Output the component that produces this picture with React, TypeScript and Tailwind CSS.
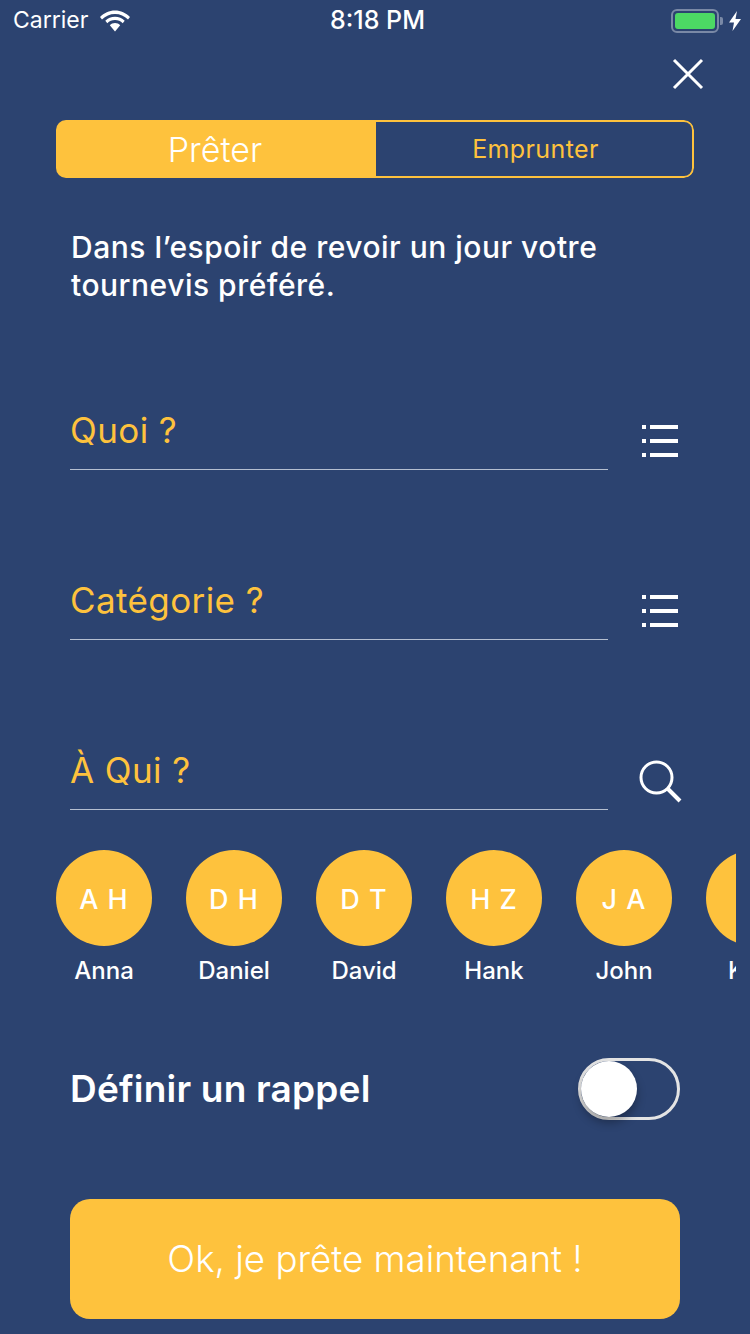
const INTER = "font-['Inter',sans-serif]";

const people = [
  { initials: "A H", name: "Anna" },
  { initials: "D H", name: "Daniel" },
  { initials: "D T", name: "David" },
  { initials: "H Z", name: "Hank" },
  { initials: "J A", name: "John" },
  { initials: "K", name: "Kate" },
];

const ListIcon = () => (
  <svg width="36" height="32" viewBox="0 0 36 32" fill="#fff" className="block">
    <rect x="0" y="0" width="4" height="4" />
    <rect x="8" y="0" width="28" height="4" />
    <rect x="0" y="14" width="4" height="4" />
    <rect x="8" y="14" width="28" height="4" />
    <rect x="0" y="28" width="4" height="4" />
    <rect x="8" y="28" width="28" height="4" />
  </svg>
);

const SearchIcon = () => (
  <svg width="44" height="44" viewBox="0 0 44 44" fill="none" stroke="#fff" className="ml-[1px] mt-[2px] block shrink-0">
    <circle cx="17.5" cy="17.5" r="15.5" strokeWidth="3" />
    <path d="M28.500 28.500L41 41" strokeWidth="4" />
  </svg>
);

const Field = ({ label, icon }: { label: string; icon: React.ReactNode }) => (
  <div className="flex h-[170px] items-end pl-[70px]">
    <div className="flex h-[70px] w-[538px] items-start border-b border-[#b5bfd0] text-[35px] leading-[40px] tracking-[0.4px] text-[#fec23d]">
      <span className="mt-[10px]">{label}</span>
    </div>
    <div className="ml-[30px] flex h-[58px] w-[44px] items-center justify-center self-end">{icon}</div>
  </div>
);

export default function App() {
  return (
    <div className={`${INTER} flex h-[1334px] w-[750px] flex-col overflow-hidden bg-[#2c4370] text-white`}>
      {/* status bar */}
      <div className="flex h-[40px] items-center justify-between pl-[13px] pr-[8px] pt-[1px] text-[24px]">
        <div className="flex w-[250px] items-center gap-[12px]">
          <span className="text-[23px] font-normal">Carrier</span>
          <svg width="30" height="22" viewBox="0 0 30 22" fill="#fff">
            <path d="M15 4C20 4 24.500 6 28 9.500L30 7C26 3 20.800 0.500 15 0.500S4 3 0 7L2 9.500C5.500 6 10 4 15 4Z" />
            <path d="M15 10C18 10 20.600 11.200 22.700 13.200L24.700 10.700C22.200 8.200 18.800 6.700 15 6.700S7.800 8.200 5.300 10.700L7.300 13.200C9.400 11.200 12 10 15 10Z" />
            <path d="M15 13C13 13 11.200 13.800 9.800 15.200L15 21.500L20.200 15.200C18.800 13.800 17 13 15 13Z" />
          </svg>
        </div>
        <span className="text-[25px] font-medium">8:18 PM</span>
        <div className="flex w-[250px] items-center justify-end">
          <div className="flex h-[24px] w-[48px] items-center rounded-[6px] border-2 border-[#7a89a6] p-[2px]">
            <div className="h-full w-full rounded-[3px] bg-[#4cd964]" />
          </div>
          <div className="ml-[1px] h-[8px] w-[3px] rounded-r-[2px] bg-[#7a89a6]" />
          <svg width="14" height="20" viewBox="0 0 14 20" fill="#fff" className="ml-[5px]">
            <path d="M9 0L1 11.500H6L4.500 20L13 8H7.500Z" />
          </svg>
        </div>
      </div>

      {/* close */}
      <div className="flex h-[80px] justify-end pr-[46px] pt-[18px]">
        <svg width="32" height="32" viewBox="0 0 32 32" stroke="#fff" strokeWidth="3" fill="none" className="block">
          <path d="M2 2L30 30M30 2L2 30" />
        </svg>
      </div>

      {/* segment */}
      <div className="ml-[56px] flex h-[58px] w-[638px] overflow-hidden rounded-[10px]">
        <div className="flex w-[320px] items-center justify-center bg-[#fec23d] pr-[2px] pt-[1px] text-[34px] font-light">Prêter</div>
        <div className="flex flex-1 items-center justify-center rounded-r-[10px] border-2 border-l-0 border-[#fec23d] pl-[3px] pt-[2px] text-[25px] tracking-[0.4px] text-[#fec23d]">Emprunter</div>
      </div>

      {/* intro */}
      <p className="ml-[71px] mt-[50px] text-[30px] font-medium leading-[38px] tracking-[0.5px]">
        Dans l’espoir de revoir un jour votre
        <br />
        tournevis préféré.
      </p>

      <div className="mt-[-4px]">
        <Field label="Quoi ?" icon={<ListIcon />} />
        <Field label="Catégorie ?" icon={<ListIcon />} />
        <Field label="À Qui ?" icon={<SearchIcon />} />
      </div>

      {/* contacts */}
      <div className="ml-[56px] mt-[40px] flex w-[680px] gap-[34px] overflow-hidden">
        {people.map((p) => (
          <div key={p.name} className="flex w-[96px] shrink-0 flex-col items-center">
            <div className="flex h-[96px] w-[96px] items-center justify-center rounded-full bg-[#fec23d] pt-[4px] text-[27px] font-medium tracking-[1px]">
              {p.initials}
            </div>
            <span className="mt-[11px] text-[24px] font-medium leading-[28px]">{p.name}</span>
          </div>
        ))}
      </div>

      {/* reminder */}
      <div className="mt-[73px] flex items-center justify-between pl-[70px] pr-[70px]">
        <span className="text-[37px] font-semibold leading-[44px] tracking-[0.2px]">Définir un rappel</span>
        <div className="relative h-[62px] w-[102px] rounded-full border-[3px] border-[#e4e4e4]">
          <div className="absolute left-0 top-0 h-[56px] w-[56px] rounded-full bg-white shadow-[0_6px_10px_rgba(0,0,0,0.3)]" />
        </div>
      </div>

      {/* submit */}
      <div className="mx-[70px] mt-[79px] flex h-[120px] items-center justify-center rounded-[20px] bg-[#fec23d] text-[36.700px] font-light">
        Ok, je prête maintenant !
      </div>
    </div>
  );
}
